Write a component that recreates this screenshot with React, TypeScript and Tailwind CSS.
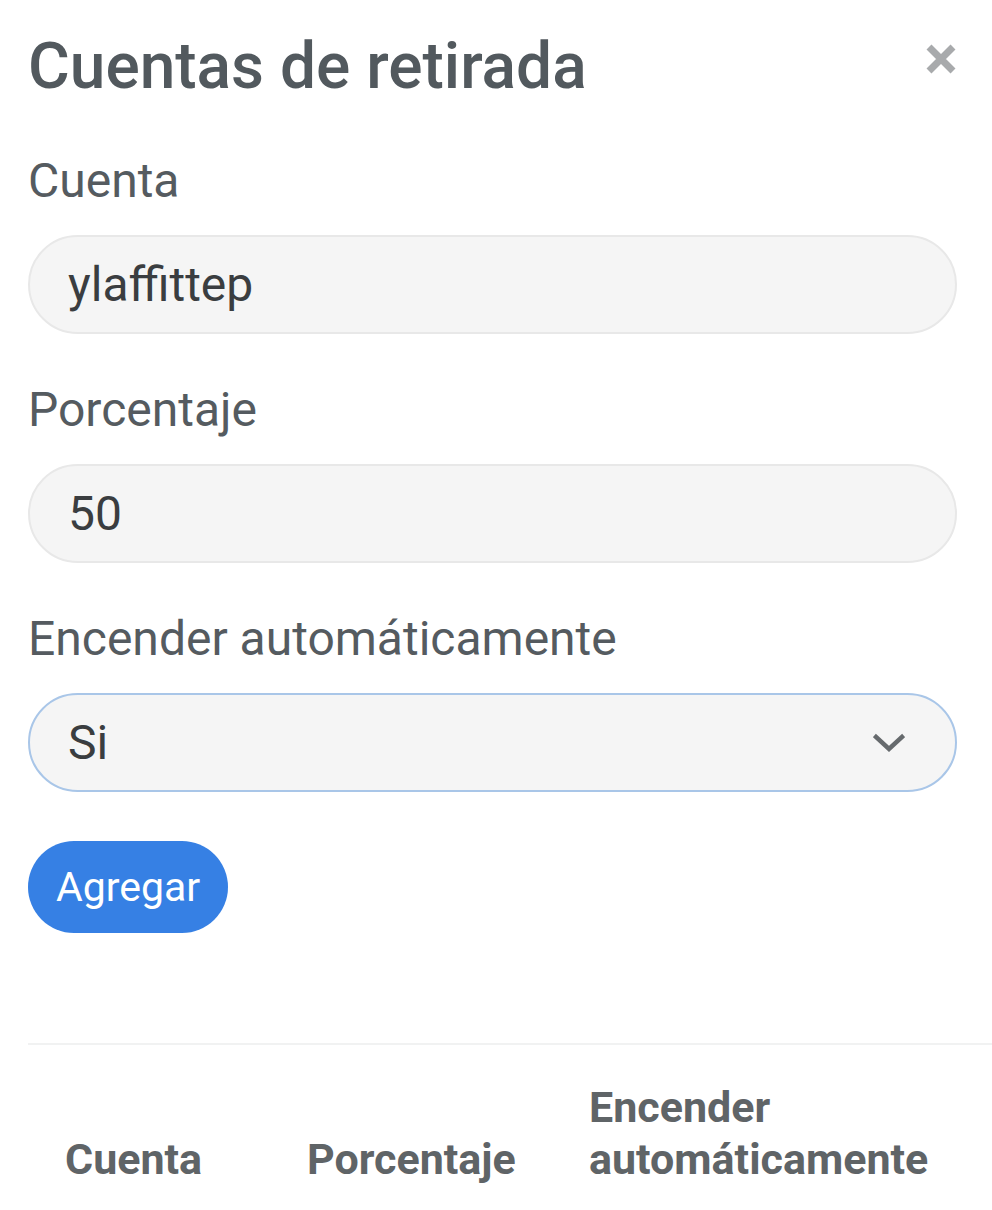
import React from "react";

function Field({ label, value, select, first }: { label: string; value: string; select?: boolean; first?: boolean }) {
  return (
    <div className={first ? "mt-[58px]" : "mt-[52px]"}>
      <div className="text-[48px] leading-[48px] text-[#555b60]">{label}</div>
      <div
        className={
          "mt-[30px] flex h-[99px] w-[929px] items-center justify-between rounded-full border-2 bg-[#f5f5f5] pl-[38px] pr-[50px] text-[48px] leading-[48px] text-[#3a3d40] " +
          (select ? "border-[#a9c6e8]" : "border-[#e8e8e8]")
        }
      >
        <span>{value}</span>
        {select && (
          <svg width="32" height="22" viewBox="0 0 32 22" className="mt-[2px]">
            <path d="M3 4 L16 16 L29 4" fill="none" stroke="#666a6d" strokeWidth="4.5" strokeLinecap="square" />
          </svg>
        )}
      </div>
    </div>
  );
}

export default function App() {
  return (
    <div className="min-h-[1210px] w-[992px] overflow-hidden bg-white pl-[28px] font-['Roboto',sans-serif]">
      <div className="flex items-start justify-between pt-[35px] pr-[36px]">
        <h1 className="text-[64px] font-medium leading-[64px] text-[#52595e]">Cuentas de retirada</h1>
        <svg width="30" height="30" viewBox="0 0 30 30" className="mt-[9px]">
          <path d="M3 3 L27 27 M27 3 L3 27" stroke="#a8aaac" strokeWidth="7" />
        </svg>
      </div>

      <Field label="Cuenta" value="ylaffittep" first />
      <Field label="Porcentaje" value="50" />
      <Field label="Encender automáticamente" value="Si" select />

      <button className="mt-[49px] flex h-[92px] items-center rounded-full bg-[#3680e4] px-[28px] text-[41px] leading-[42px] text-white">
        Agregar
      </button>

      <div className="mt-[110px] h-[2px] w-[964px] bg-[#f1f2f2]" />

      <div className="mt-[36px] ml-[37px] grid grid-cols-[242px_282px_auto] items-end text-[43px] font-bold leading-[52px] text-[#5f6467]">
        <div>Cuenta</div>
        <div>Porcentaje</div>
        <div>
          Encender
          <br />
          automáticamente
        </div>
      </div>
    </div>
  );
}
